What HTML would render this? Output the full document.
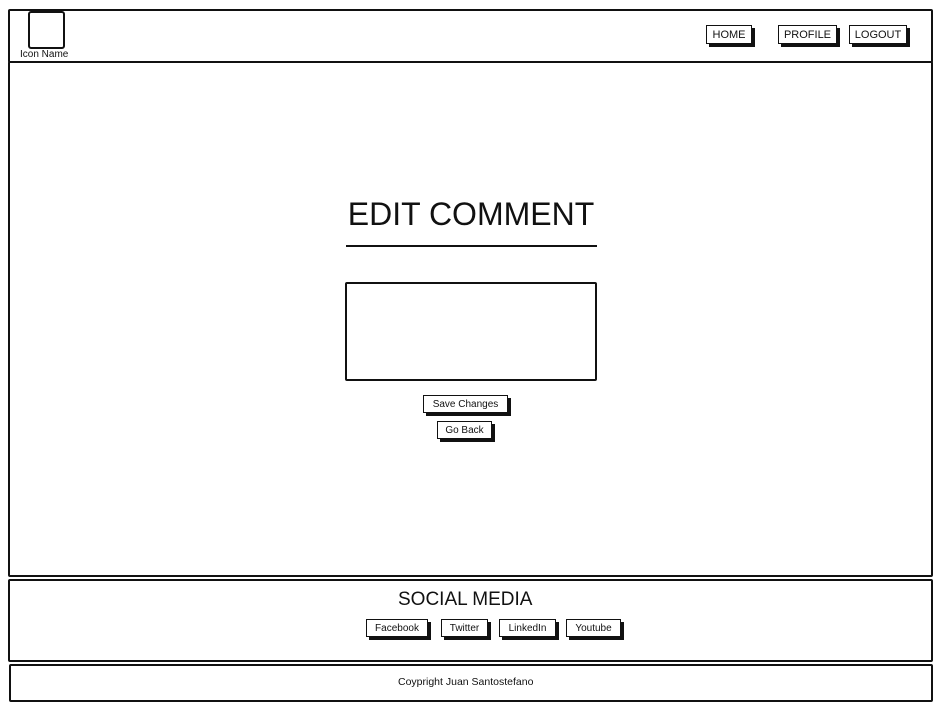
<!DOCTYPE html>
<html><head><meta charset="utf-8"><style>
*{margin:0;padding:0;box-sizing:border-box}
body{width:940px;height:708px;background:#fff;position:relative;overflow:hidden;font-family:"Liberation Sans",sans-serif;color:#111}
.box{position:absolute;border:2px solid #111;border-radius:2px}
.btn{position:absolute;border:1.5px solid #111;background:#fff;box-shadow:3px 3px 0 #111;font-size:11px;display:flex;align-items:center;justify-content:center;white-space:nowrap}
.t{position:absolute;white-space:nowrap}
</style></head><body>
<div class="box" style="left:8px;top:9px;width:925px;height:54px"></div>
<div class="box" style="left:8px;top:61px;width:925px;height:516px"></div>
<div class="box" style="left:8px;top:579px;width:925px;height:83px"></div>
<div class="box" style="left:9px;top:664px;width:924px;height:38px"></div>

<div class="box" style="left:28px;top:11px;width:37px;height:38px;border-radius:3px"></div>
<div class="t" style="left:20px;top:49px;font-size:10px">Icon Name</div>

<div class="btn" style="left:706px;top:25px;width:46px;height:19px">HOME</div>
<div class="btn" style="left:778px;top:25px;width:59px;height:19px">PROFILE</div>
<div class="btn" style="left:849px;top:25px;width:58px;height:19px">LOGOUT</div>

<div class="t" style="left:346px;top:196px;width:250px;text-align:center;font-size:32px;">EDIT COMMENT</div>
<div style="position:absolute;left:346px;top:245px;width:251px;height:2px;background:#111"></div>

<div class="box" style="left:345px;top:282px;width:252px;height:99px"></div>

<div class="btn" style="left:423px;top:395px;width:85px;height:18px;font-size:10px">Save Changes</div>
<div class="btn" style="left:437px;top:421px;width:55px;height:18px;font-size:10px">Go Back</div>

<div class="t" style="left:398px;top:589px;font-size:19px">SOCIAL MEDIA</div>
<div class="btn" style="left:366px;top:619px;width:62px;height:18px;font-size:10px">Facebook</div>
<div class="btn" style="left:441px;top:619px;width:47px;height:18px;font-size:10px">Twitter</div>
<div class="btn" style="left:499px;top:619px;width:57px;height:18px;font-size:10px">LinkedIn</div>
<div class="btn" style="left:566px;top:619px;width:55px;height:18px;font-size:10px">Youtube</div>

<div class="t" style="left:398px;top:676px;font-size:10.5px">Coypright Juan Santostefano</div>
</body></html>
